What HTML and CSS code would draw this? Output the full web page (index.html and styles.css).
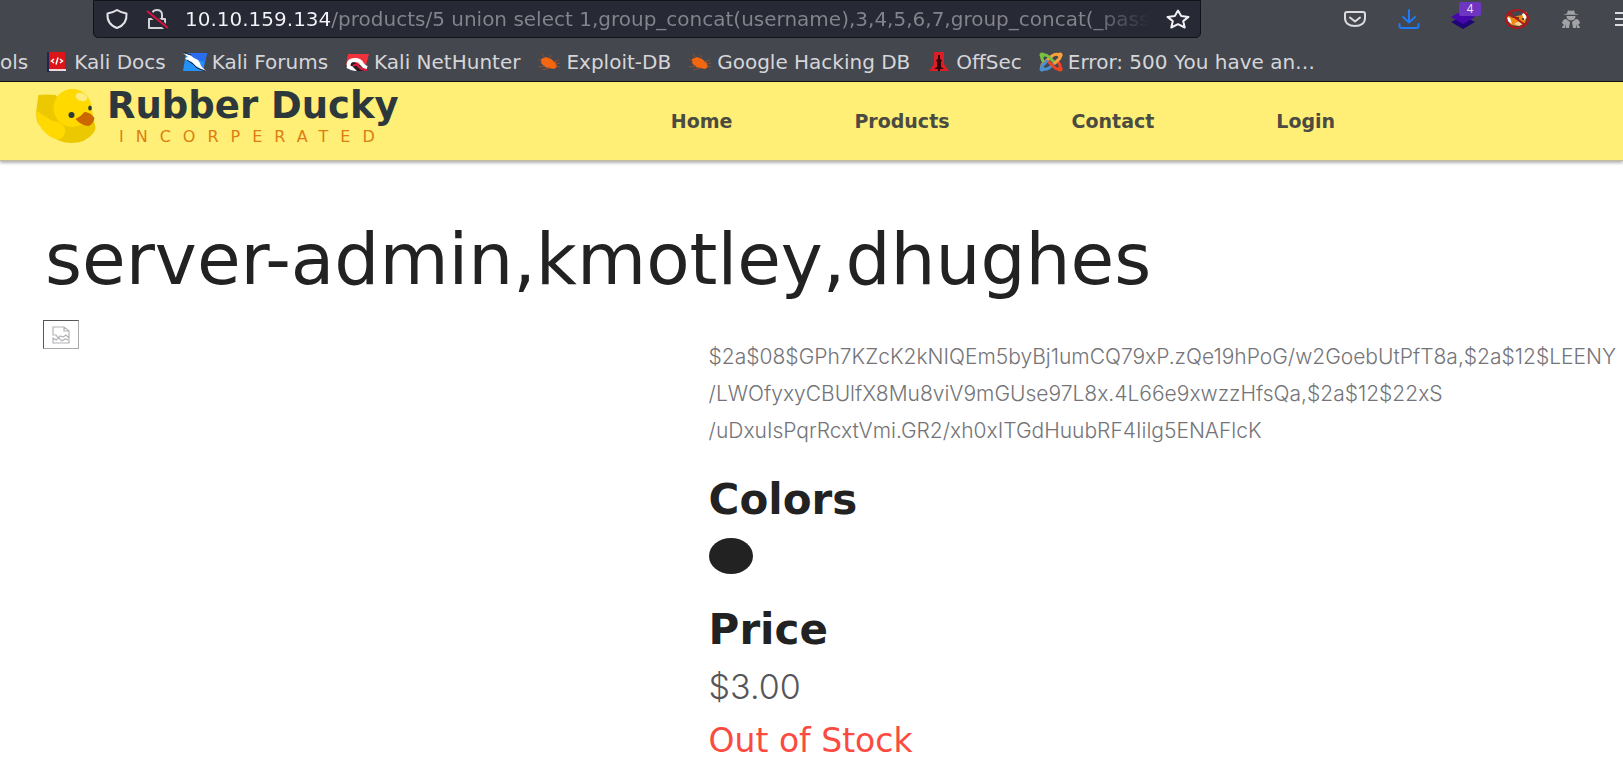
FILE: index.html
```html
<!DOCTYPE html>
<html lang="en">
<head>
<meta charset="utf-8">
<title>Rubber Ducky Incorperated</title>
<link rel="stylesheet" href="styles.css">
</head>
<body>
<div class="browser">
  <div class="toolbar">
    <div class="address">
      <svg class="address-icon" viewBox="0 0 24 22" fill="none" stroke="#e4e4e8" stroke-width="2" stroke-linejoin="round"><path d="M12 2c3 2 6 3 9.500 3.500C22 12 19 17.500 12 20 5 17.500 2 12 2.500 5.500 6 5 9 4 12 2z"/></svg>
      <svg class="address-icon" viewBox="0 0 24 22" fill="none" stroke="#d4d4d8" stroke-width="2"><path d="M7 10V6.500C7 3.500 9.500 2 12 2s5 1.500 5 4.500V11M4 11h16v9H4z" stroke-linejoin="round"/><path d="M2 3l20 17" stroke="#272935" stroke-width="5"/><path d="M2 3l21 17" stroke="#d8123f"/></svg>
      <input class="url" type="text" aria-label="Address" value="10.10.159.134/products/5 union select 1,group_concat(username),3,4,5,6,7,group_concat(_pass">
      <button class="icon-button" aria-label="Bookmark this page"><svg viewBox="0 0 24 20" fill="none" stroke="#f0f0f4" stroke-width="2" stroke-linejoin="round"><path d="M12 1.500l3.200 5.500 7.300.9-5.300 4.200 1.500 6.400L12 15.200l-6.700 3.300 1.500-6.400L1.500 7.900 8.800 7z"/></svg></button>
    </div>
    <div class="actions">
      <button class="icon-button" aria-label="Save to Pocket"><svg viewBox="0 0 24 20" fill="none" stroke="#dcdce0" stroke-width="2" stroke-linecap="round" stroke-linejoin="round"><path d="M4 3h16q2 0 2 2v4c0 5-4 8-10 8S2 14 2 9V5q0-2 2-2z"/><path d="M7 8.500l5 4 5-4"/></svg></button>
      <button class="icon-button" aria-label="Downloads"><svg viewBox="0 0 24 20" fill="none" stroke="#2079f5" stroke-width="2" stroke-linecap="round" stroke-linejoin="round"><path d="M12 1v12M6 8l6 5.500L18 8M2.500 15v2q0 2 2 2h15q2 0 2-2v-2"/></svg></button>
      <button class="icon-button has-badge" aria-label="Wappalyzer"><svg viewBox="0 0 24 20"><path d="M0 13l12-6 12 6-12 7z" fill="#1f0575"/><path d="M0 8l12-7 12 7-12 7z" fill="#4608ad"/></svg><span class="badge">4</span></button>
      <button class="icon-button" aria-label="FoxyProxy"><svg viewBox="0 0 24 20"><path d="M2 6q1 8 5 10 6 2 11-1 4-2 4-12l-5 3-5 1-4 2z" fill="#f08a12"/><path d="M2 8l3 1 2 6-4-3zM17 5l4-2 1 5-3 3z" fill="#fff"/><path d="M9 15l5-3 4 3-4 2z" fill="#f9d391"/><path d="M11 9h3M17 10h2" stroke="#34200e" stroke-width="1.500"/><ellipse cx="12" cy="10" rx="11" ry="9" fill="none" stroke="#b0161b" stroke-width="2"/><path d="M4 4l16 12" stroke="#b0161b" stroke-width="2"/></svg></button>
      <button class="icon-button" aria-label="Privacy tool"><svg viewBox="0 0 24 20" fill="#a2a3a6"><path d="M8 4.500L9 1.200q3 1 6 0l1 3.300 4 1.300H4z"/><path d="M7.500 7h9q0 4-4.500 4.500Q7.500 11 7.500 7z"/><path d="M7 10l4 3-1 6H7v-4l-1 4H3q0-2 2-3l-2-2q1-4 4-4zM17 10l-4 3 1 6h3v-4l1 4h3q0-2-2-3l2-2q-1-4-4-4z"/></svg></button>
      <button class="icon-button" aria-label="Menu"><svg viewBox="0 0 24 20" stroke="#dcdce0" stroke-width="2"><path d="M2 4h20M2 10h20M2 16h20"/></svg></button>
    </div>
  </div>
  <nav class="bookmarks" aria-label="Bookmarks">
    <a class="bookmark" href="#">ols</a>
    <a class="bookmark" href="#"><svg viewBox="0 0 24 20"><path d="M2 0h3v20H2z" fill="#1d2550"/><path d="M4 0h16v17H4z" fill="#db1518"/><path d="M4 17h17v2H4z" fill="#ead9dc"/><path d="M9 7l-2.500 2L9 11M15 7l2.500 2-2.500 2M13 5.500l-2 7" stroke="#fff" stroke-width="1.500" fill="none"/></svg>Kali Docs</a>
    <a class="bookmark" href="#"><svg viewBox="0 0 24 20"><path d="M3 1h21l-4 18H0z" fill="#2391f7"/><path d="M5 1h19l-2 9-11-3z" fill="#2a6df0"/><path d="M0 1l3 1 4 1 4 3 4 2 2 3 1 3 5 5-5-2-5-3-4-4-5-2-2-2 3-1z" fill="#fff"/><path d="M0 0l5 2 3 1M4 8l6 4 4 4 8 3" stroke="#20242c" fill="none"/></svg>Kali Forums</a>
    <a class="bookmark" href="#"><svg viewBox="0 0 24 20"><path d="M3 2h21l-3 11H1z" fill="#f2323b"/><path d="M0 14q4 5 12 5h7l-5-6-7-4z" fill="#251b25"/><path d="M4 16Q2 8 10 8q5 0 7 4 2 3 5 4" stroke="#fff" stroke-width="4" fill="none"/><path d="M8 14q3-3 6 1 3 3 8 3" stroke="#d91b3c" stroke-width="2" fill="none"/><path d="M1 15q4 4 11 4l-5-5z" fill="#fff"/></svg>Kali NetHunter</a>
    <a class="bookmark" href="#"><svg viewBox="0 0 24 20"><path d="M4 7l5-2 5 2 5 4 1 4-3 2-5-1-4-1-4-4z" fill="#f2670f"/><path d="M8 6L5 2M13 7l0-4M16 10l6-2M19 14l4 1M5 10l-4-3M8 14l-7 1M13 16l-8 2M18 12l5-1" stroke="#8a5035"/></svg>Exploit-DB</a>
    <a class="bookmark" href="#"><svg viewBox="0 0 24 20"><path d="M4 7l5-2 5 2 5 4 1 4-3 2-5-1-4-1-4-4z" fill="#f2670f"/><path d="M8 6L5 2M13 7l0-4M16 10l6-2M19 14l4 1M5 10l-4-3M8 14l-7 1M13 16l-8 2M18 12l5-1" stroke="#8a5035"/></svg>Google Hacking DB</a>
    <a class="bookmark" href="#"><svg viewBox="0 0 24 20"><path d="M7 0h10v12l5 7H2l5-7z" fill="#dd1e27"/><path d="M11 3h2v4l2 1-1 2v5l3 2h-4v2h-2v-2H7l3-2v-5L9 8l2-1z" fill="#2c0509"/></svg>OffSec</a>
    <a class="bookmark" href="#"><svg viewBox="0 0 24 20" fill="none" stroke-width="3" stroke-linecap="round"><path d="M3 16q-1-3 2-5l8-7q4-3 7-1" stroke="#f9a13a"/><path d="M3 17q4 1 7-1l9-8" stroke="#4a8fd0"/><path d="M4 9Q2 5 3 3q4-1 7 2l5 5" stroke="#7ac043"/><path d="M10 10l5 5q3 3 6 2 1-4-2-7" stroke="#f04423"/><path d="M3 17q-1-3 2-5l3-3" stroke="#4a8fd0"/><path d="M21 3q1 3-2 5l-3 3" stroke="#f9a13a"/><g stroke-width="5"><path d="M3 3h.1" stroke="#7ac043"/><path d="M21 3h.1" stroke="#f9a13a"/><path d="M21 17h.1" stroke="#f04423"/><path d="M3 17h.1" stroke="#4a8fd0"/></g></svg>Error: 500 You have an…</a>
  </nav>
</div>
<header class="site-header">
  <a class="brand" href="#">
    <svg class="duck" viewBox="0 0 61 54"><path d="M2 6q7-1 17 0l20 22 18 4q4 7 0 12-8 10-22 10-13 0-22-9L2 35Q-1 30 0 20z" fill="#ecc800"/><path d="M0 22q0 14 9 22 9 8 15 6 6-4 4-12-3-5-12-6z" fill="#ffd900"/><circle cx="36" cy="19" r="19" fill="#ffd900"/><path d="M54 14q3 9 2 18l-10 4q-16 0-18-8 12 6 26-14z" fill="#ffd900"/><ellipse cx="45" cy="8" rx="6" ry="4" transform="rotate(18 45 8)" fill="#ffec80"/><circle cx="35" cy="26" r="3" fill="#2d383c"/><ellipse cx="53.500" cy="19" rx="1.800" ry="2.500" fill="#2d383c"/><path d="M39 30q5-2 9-7 6 0 10 6-1 6-6 8-7 0-13-7z" fill="#cc6600"/></svg>
    <span class="brand-text"><span class="brand-name">Rubber Ducky</span><span class="brand-sub">INCORPERATED</span></span>
  </a>
  <nav class="site-nav" aria-label="Main">
    <a href="#">Home</a><a href="#">Products</a><a href="#">Contact</a><a href="#">Login</a>
  </nav>
</header>
<main class="product">
  <h1 class="product-name">server-admin,kmotley,dhughes</h1>
  <div class="product-body">
    <div class="product-media">
      <div class="missing" role="img" aria-label="Product image"><svg viewBox="0 0 18 18" fill="none" stroke="#b4b4b8" stroke-width="1.200"><path d="M1 9V1h11l5 4v7l-3-3-3 2-3-1-2 2-2-3zM12 1v4h5M1 17v-5l3 2 3-2 3 3 3-2 4 1v3z"/></svg></div>
    </div>
    <div class="product-info">
      <p class="description">$2a$08$GPh7KZcK2kNIQEm5byBj1umCQ79xP.zQe19hPoG/w2GoebUtPfT8a,$2a$12$LEENY<br>/LWOfyxyCBUlfX8Mu8viV9mGUse97L8x.4L66e9xwzzHfsQa,$2a$12$22xS<br>/uDxuIsPqrRcxtVmi.GR2/xh0xITGdHuubRF4Iilg5ENAFlcK</p>
      <h2 class="label">Colors</h2>
      <div class="swatch"></div>
      <h2 class="label">Price</h2>
      <p class="price">$3.00</p>
      <p class="stock">Out of Stock</p>
    </div>
  </div>
</main>
</body>
</html>
```
FILE: styles.css
```css
* { box-sizing: border-box; }
body {
  margin: 0;
  background: #fff;
  color: #222;
  font-family: "DejaVu Sans", sans-serif;
  overflow: hidden;
}
a { color: inherit; text-decoration: none; }
h1, h2, p { margin: 0; }
svg { display: block; flex: none; }

.browser { background: #44474d; border-bottom: 1px solid #111216; overflow: hidden; }
.toolbar { display: flex; align-items: center; padding-left: 93px; margin-right: -14px; }
.address {
  flex: 1;
  min-width: 0;
  height: 38px;
  display: flex;
  align-items: center;
  gap: 16px;
  padding: 0 10px 0 11px;
  background: #272935;
  border: 1px solid #121318;
  border-radius: 0 0 5px 5px;
}
.address-icon { width: 24px; height: 22px; }
.url {
  flex: 1;
  min-width: 0;
  padding: 0;
  border: 0;
  outline: 0;
  font: 20px/28px "DejaVu Sans", sans-serif;
  color: transparent;
  background: linear-gradient(90deg, #f4f4f8 146px, #84858c 146px, #84858c calc(100% - 60px), transparent);
  -webkit-background-clip: text;
  background-clip: text;
}
.icon-button { position: relative; padding: 0; border: 0; background: none; }
.icon-button svg { width: 24px; height: 20px; }
.actions { display: flex; gap: 30px; margin-left: 142px; }
.badge {
  position: absolute;
  left: 8px;
  top: -7px;
  width: 22px;
  height: 14px;
  border-radius: 2px;
  background: #6d35c0;
  color: #e8dcf8;
  font-size: 12px;
  line-height: 14px;
}
.bookmarks { display: flex; align-items: center; gap: 17px; height: 43px; padding-top: 4px; white-space: nowrap; }
.bookmark { display: flex; align-items: center; gap: 5px; color: #d6d6da; font-size: 20px; line-height: 28px; }
.bookmark svg { width: 24px; height: 20px; }

.site-header {
  display: flex;
  align-items: center;
  height: 79px;
  padding: 0 36px;
  background: #ffef76;
  border-bottom: 1px solid #c2bd98;
  box-shadow: 0 2px 3px rgba(0, 0, 0, 0.3);
}
.brand { display: flex; align-self: flex-start; gap: 9px; }
.duck { width: 62px; height: 54px; margin-top: 7px; }
.brand-text { display: flex; flex-direction: column; padding-top: 2px; }
.brand-name { color: #2d383c; font-weight: 700; font-size: 37px; line-height: 43px; }
.brand-sub { padding-left: 12px; color: #dd7d12; font-size: 16px; line-height: 20px; letter-spacing: 12px; }
.site-nav { display: flex; gap: 122px; margin-left: 272px; color: #4b4b42; font-weight: 700; font-size: 19px; line-height: 28px; }

.product { padding: 51px 0 0 43px; }
.product-name { padding-left: 2px; font-weight: 400; font-size: 71px; line-height: 96px; }
.product-body { display: grid; grid-template-columns: 42% 1fr; padding-top: 12px; }
.missing {
  display: grid;
  place-items: center;
  width: 36px;
  height: 29px;
  border: 1px solid #a9a9ac;
  border-top-color: #55565a;
  border-left-color: #55565a;
}
.missing svg { width: 18px; height: 18px; }
.product-info { padding: 18px 0 0 2px; }
.description { color: #747478; font-family: Inter, sans-serif; font-weight: 300; font-size: 21px; line-height: 37px; white-space: nowrap; }
.label { margin-top: 21px; font-weight: 700; font-size: 42px; line-height: 60px; }
.swatch { width: 44px; height: 36px; margin: 8px 0 26px; border-radius: 50%; background: #222; }
.price { color: #55565a; font-family: Inter, sans-serif; font-weight: 300; font-size: 34px; line-height: 54px; }
.stock { color: #fb4b40; font-size: 33px; line-height: 54px; }
```
